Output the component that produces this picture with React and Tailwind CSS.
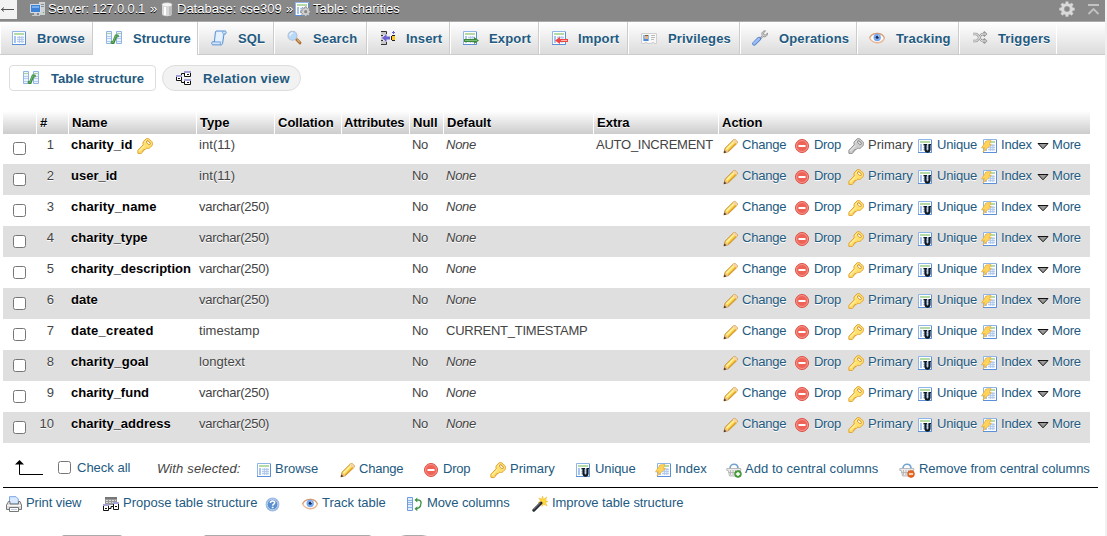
import React from "react";

function Svg({ children, className = "" }) {
  return (
    <svg viewBox="0 0 16 16" className={`h-4 w-4 shrink-0 ${className}`} fill="none" aria-hidden="true">
      {children}
    </svg>
  );
}

function Sheet() {
  return (
    <>
      <path d="M1.5 1.5h13v13h-13z" fill="#fff" stroke="#8fb4e8" />
      <path d="M14.5 2v12.500H1" stroke="#5b8fd8" />
      <path d="M3 3h10v2H3z" fill="#b4dba6" />
      <path d="M3 6h2v7H3z" fill="#a9c4ec" />
      <path d="M6 6h7v7H6z" fill="#e6effb" />
      <path d="M6 7.500h7M6 9.500h7M6 11.500h7M8.500 6v7M10.900 6v7" stroke="#a9c4ec" strokeWidth=".8" />
    </>
  );
}

const Browse = () => <Svg><Sheet /></Svg>;

const Structure = () => (
  <Svg>
    <path d="M.5 1.500h5v12h-5zM10.500 1.500h5v12h-5z" fill="#edf4fd" stroke="#8fb4e6" />
    <path d="M1 3.500h4M11 3.500h4" stroke="#a9d59c" />
    <path d="M1 6.500h4M1 8.500h4M1 11.500h4M11 6.500h4M11 8.500h4M11 11.500h4" stroke="#b4cbec" />
    <path d="M6 12.500h1.300L10 6h1.500" stroke="#3d8a3d" strokeWidth="2.800" strokeLinecap="round" />
    <path d="M6 12.200h1L9.700 6h1.800" stroke="#6db767" strokeWidth="1.100" strokeLinecap="round" />
  </Svg>
);

const Sql = () => (
  <Svg>
    <path d="M5 1h9.300c1.200 0 1.200 3 0 3H13l-1.400 9.500c-.2 1-.8 1.400-1.600 1.400H1.800c-1.500 0-1.400-3.200 0-3.200h1.600L4.300 3c.1-1 .2-1.600.7-2z" fill="#d0e4fa" stroke="#5c92d2" />
    <path d="M5.600 2h6.200l-1.300 9.700H4.300z" fill="#e6f1fe" />
    <path d="M12 1.300c-.8.5-.7 2.200.7 2.600M3 11.900h6.600c-.6 1-.4 2.400.4 2.800" stroke="#5c92d2" strokeWidth=".8" />
  </Svg>
);

const Search = () => (
  <Svg>
    <path d="m9.700 9.500 3.200 3.300" stroke="#a86d33" strokeWidth="3" strokeLinecap="round" />
    <path d="m10.100 9.500 2.800 2.900" stroke="#e0b070" strokeWidth="1.200" />
    <circle cx="5.500" cy="5.800" r="4.500" fill="#b9d9fa" stroke="#b2c0d4" strokeWidth="1.100" />
    <path d="M3 5.800a2.800 2.800 0 0 1 2.800-2.800" stroke="#eff8ff" strokeWidth="1.400" />
  </Svg>
);

const Insert = () => (
  <Svg>
    <path d="M1 2h5v3H1zM1 11h5v3H1zM1 5h2v6H1z" fill="#c9c9c9" />
    <path d="M1 1.500h5.500V4M1 5.500h2M1 10.500h2M6.500 12v2.500H1" stroke="#333" />
    <path d="m2 8 4.500-4v2.500H10v3H6.500V12z" fill="#6a62d2" />
    <path d="M15 5.500h-3M15 10.500h-3M11.500 6v4" stroke="#222" />
    <path d="M12 6h3v4h-3z" fill="#ffc524" />
    <path d="M13.500 1v3M12 2.500h3" stroke="#6a62d2" />
  </Svg>
);

const Export = () => (
  <Svg>
    <g transform="translate(-1 0)"><Sheet /></g>
    <path d="M1 9h10V7l5 3.500-5 3.500v-2H1z" fill="#3b8a3b" />
    <path d="M2 10.500h12" stroke="#80bd76" />
  </Svg>
);

const Import = () => (
  <Svg>
    <g transform="translate(-1 0)"><Sheet /></g>
    <path d="M16 9H8V7l-5 3.500L8 14v-2h8z" fill="#f04545" />
    <path d="M9 10.500h6" stroke="#ffb5a9" />
  </Svg>
);

const Privileges = () => (
  <Svg>
    <path d="M.5 3.500h15v10H13v-1h-2v1H6v-1H4v1H.5z" fill="#f8f8f8" stroke="#d0d0d0" />
    <path d="M2 5h6v6H2z" fill="#8abaf0" />
    <path d="M3 9h4v2H3z" fill="#4f86cf" />
    <path d="M4 6h3v3H4z" fill="#e8b582" />
    <path d="M4 5h3v1H4z" fill="#8a5a30" />
    <path d="M10 5.500h4M10 7.500h4M10 9.500h3" stroke="#bbb" />
  </Svg>
);

const Wrench = () => (
  <Svg>
    <path d="m7 9 3.200-3.300C9 3 11 .6 13.500.8l-2 2.300.4 1.600 1.600.4 2-2.200c.4 2.700-2 4.700-4.400 3.600L8 9.800z" fill="#d6d6d6" stroke="#8d8d8d" strokeWidth=".9" />
    <path d="m2.200 13.600 4.900-4.800" stroke="#517fc9" strokeWidth="4" strokeLinecap="round" />
    <path d="m2.200 13.300 4.700-4.500" stroke="#9cc0f6" strokeWidth="2.500" strokeLinecap="round" />
  </Svg>
);

const Eye = () => (
  <Svg>
    <path d="M.7 8C3 2.500 13 1.500 15.300 8 13.500 14 4 14.500.7 8z" fill="#fff" stroke="#e9b48e" strokeWidth="1.400" />
    <path d="M.6 7.500C3.500 2 12.500 1.800 15.400 7.500" stroke="#cf9a78" strokeWidth="1" />
    <circle cx="8.200" cy="7.500" r="3.700" fill="#7ba9ee" />
    <circle cx="8.200" cy="7.200" r="1.500" fill="#182d58" />
    <circle cx="9.500" cy="6" r=".6" fill="#fff" />
  </Svg>
);

const Triggers = () => (
  <Svg>
    <path d="M1 4h3c3 0 3.500 7 7 7h3M1 11h3c3 0 3.500-7 7-7h3M11.500 1.800 13.800 4l-2.300 2.200M11.500 8.800l2.300 2.200-2.300 2.200" stroke="#959595" strokeWidth="2.300" />
    <path d="M1 4h3c3 0 3.500 7 7 7h3M1 11h3c3 0 3.500-7 7-7h3" stroke="#eee" strokeWidth="1" />
  </Svg>
);

const Relation = () => (
  <Svg>
    <path d="M8 3.500H5.500V6M5.500 11v1.500H8" stroke="#111" />
    <path d="M8.500 2.500h6v4h-6zM.5 6.500h5v4h-5zM8.500 10.500h6v4h-6z" fill="#fff" stroke="#111" />
    <path d="M8 1h7v2H8zM0 5h6v2H0zM8 9h7v2H8z" fill="#a3a1d6" />
    <path d="M11 4.500h2M2 8.500h2M11 12.500h2" stroke="#111" />
  </Svg>
);

const Key = ({ gray = false }) => (
  <Svg>
    <path
      d="M9.300.7c1.500-.4 2.600 0 3.700 1.100l1.700 1.700c1.200 1.200 1.200 2.800.2 4.200l-1.800 1.900c-1 1-2.300 1-3.600.6L8.300 11.500H6.800V13H5.300v1.300l-.9 1.100H.9v-3.100l5.300-5.500C5.700 5.400 5.900 4 6.900 3z"
      fill={gray ? "#cdcdcd" : "#ffe06c"}
      stroke={gray ? "#919191" : "#e0a233"}
      strokeLinejoin="round"
    />
    <path d="m2 13.200 5.700-5.700M7.600 4.500 9.800 2.300" stroke={gray ? "#eee" : "#fff5bd"} />
    <path d="m10.500 3.800 1.800 1.800" stroke={gray ? "#7c7c7c" : "#c98a28"} strokeWidth="2.800" strokeLinecap="round" />
    <path d="m10.600 3.900 1.600 1.600" stroke={gray ? "#e8e8e8" : "#fff"} strokeWidth="1.400" strokeLinecap="round" />
  </Svg>
);

const Pencil = () => (
  <Svg>
    <path d="M1 14.800 2 10.300 10.600 1.800c1.200-1.200 4.800 2 3.600 3.400l-8.700 8.400z" fill="#fcdc5c" stroke="#bd8226" strokeWidth=".9" />
    <path d="m3.500 11 7.900-7.900" stroke="#fff3a8" strokeWidth="1.300" />
    <path d="m5.200 12.800 8-8" stroke="#e5a62c" strokeWidth="1.200" />
    <path d="m9.800 2.800 3.500 3.300.9-1c.9-1.200-2.400-4.400-3.600-3.300z" fill="#f6d2a8" />
    <path d="m1 14.800 1.100-4 3.200 3z" fill="#e8bd8b" />
    <path d="m.7 15.200.7-2.800 2 1.900z" fill="#4a3520" />
  </Svg>
);

const Drop = () => (
  <Svg>
    <circle cx="7" cy="8" r="6.500" fill="#ee6257" stroke="#dc5146" />
    <circle cx="7" cy="8" r="5.500" stroke="#f59a90" strokeWidth=".9" />
    <path d="M3.500 7h7v2h-7z" fill="#fff" />
  </Svg>
);

const Unique = () => (
  <Svg>
    <g transform="translate(-1 0)"><Sheet /></g>
    <path d="M7.500 7v4.500c0 2.700 4 2.700 4 0V7" stroke="#101820" strokeWidth="2.200" />
    <path d="M5.500 6.500h3.500M10.500 6.500h2.500" stroke="#101820" />
  </Svg>
);

const Index = () => (
  <Svg>
    <g transform="translate(1 0)"><Sheet /></g>
    <path d="m5 3 5-.5-1.800 4 2.300-.2L2 14l2-4.300-3.500.3z" fill="#ffd45c" stroke="#e8b040" strokeWidth=".8" />
  </Svg>
);

const More = () => (
  <svg viewBox="0 0 12 8" className="h-2 w-3 shrink-0" aria-hidden="true">
    <path d="M1 1.500h10L6 6.800z" fill="#999" stroke="#111" />
  </svg>
);

const Basket = ({ remove = false }) => (
  <Svg>
    <path d="M4 6.500C4 .8 12 .8 12 6.500" stroke="#75a3d1" strokeWidth="1.700" />
    <path d="M.8 6.500h14v2H13L11.500 14h-8L2.300 8.500H.8z" fill="#ececec" stroke="#ababab" strokeWidth=".8" />
    <path d="M4.500 8v5M7 8v5M9.500 8v5M2.500 10.500h10" stroke="#b0b0b0" strokeWidth=".8" />
    <circle cx="12" cy="12" r="3.400" fill={remove ? "#e8681f" : "#4ca23e"} stroke={remove ? "#cf5316" : "#34852b"} strokeWidth=".7" />
    <path d={remove ? "M9.900 12h4.200" : "M9.900 12h4.200M12 9.900v4.200"} stroke="#fff" strokeWidth="1.400" />
  </Svg>
);

const Printer = () => (
  <Svg>
    <path d="M3.500.7h6.500L12.300 3v5H3.500z" fill="#d8e9ff" stroke="#7aa5df" />
    <path d="M2.500 5.500H4V8h8.500V5.500H14L15.500 9v4.500H.5V9z" fill="#dedede" stroke="#777" />
    <path d="M1 9.500h14" stroke="#f8f8f8" />
    <path d="M3.500 11.500h9v4h-9z" fill="#fff" stroke="#777" />
    <path d="M5 13.500h6" stroke="#b9cde8" />
  </Svg>
);

const Propose = () => (
  <Svg>
    <path d="M2 1h12v8H2z" fill="#999" />
    <path d="M2 1h12v2H2z" fill="#777" />
    <path d="M3 4.500h10M3 6.500h10" stroke="#dcdcdc" strokeDasharray="2 1" />
    <path d="M.5 9.500h5v5h-5zM10.500 7.500h5v6h-5z" fill="#fff" stroke="#111" />
    <path d="M0 8h6v2H0zM10 6h6v2h-6z" fill="#a3a1d6" />
    <path d="M2 12.500h2M12 10.500h2M6 12.500h2v-2h2" stroke="#111" />
  </Svg>
);

const Help = () => (
  <Svg>
    <circle cx="7.500" cy="7.500" r="6.300" fill="#5b8fcf" stroke="#9bb9e0" strokeWidth="1.200" />
    <circle cx="7.500" cy="7.500" r="5.300" stroke="#dce9f8" strokeWidth=".8" />
    <path d="M5.400 6c0-2.700 4.500-2.500 4.300-.3-.1 1.400-2 1.300-2.100 2.900" stroke="#fff" strokeWidth="1.500" />
    <path d="M6.800 9.700h1.700v1.500H6.800z" fill="#fff" />
  </Svg>
);

const Move = () => (
  <Svg>
    <path d="M.5 1.500h5v13h-5z" fill="#e3eefc" stroke="#6d9ddd" />
    <path d="M1 4.500h4M1 6.500h4M1 8.500h4M1 11.500h4" stroke="#8fb4e4" />
    <path d="M8.500 4H11c3.500 0 3.500 3 2.500 5M13.800 9c-.8 3-2.500 3.500-5.300 3.700" stroke="#429348" strokeWidth="1.400" />
    <path d="M10.300 1.500 7.500 4l2.800 2.500M10.300 10.200l-2.800 2.500 2.800 2.600" fill="#429348" />
  </Svg>
);

const Wand = () => (
  <Svg>
    <path d="m10.500 0 1 3.400L14.700 1 13.500 4.500l2.500 1-2.500 1 1.500 3.300-3.500-1.600-1.500 2.300-.5-3-3.500-.6 2.500-2L6.800 2l3 1z" fill="#ffd83d" stroke="#ecb32d" strokeWidth=".5" />
    <path d="m1.800 14.200 7.200-7.200" stroke="#24282c" strokeWidth="3" strokeLinecap="round" />
    <path d="m1.600 13.700 6.900-6.900" stroke="#898f96" strokeWidth=".9" />
  </Svg>
);

const Server = () => (
  <Svg className="mt-px">
    <path d="M9 1h6v13H9z" fill="#cfd2d5" />
    <path d="M10 3.500h4M10 5.500h4" stroke="#888f96" />
    <path d="M.5 3.500h10v8H.5z" fill="#3e82d6" stroke="#d5dce5" />
    <path d="M2 5h7v2H2z" fill="#75b0f1" />
    <path d="M4 12h3v2H4zM2 14h8v1H2z" fill="#c5c8cb" />
    <path d="M13 11h1v1h-1z" fill="#62b44f" />
  </Svg>
);

const Database = () => (
  <Svg className="mt-px">
    <path d="M1 3v10c0 3 10 3 10 0V3z" fill="#d9d9d9" />
    <path d="M3 4v10h2V4z" fill="#fff" />
    <path d="M8 4v10.500c2-.2 3-.7 3-1.500V3z" fill="#bdbdbd" />
    <ellipse cx="6" cy="3.800" rx="5" ry="2" fill="#f5f5f5" stroke="#c3c3c3" strokeWidth=".6" />
  </Svg>
);

const gearPath =
  "M6.800.5h2.400l.4 2 1.300.6 1.800-1.200 1.600 1.700-1.100 1.700.5 1.300 2 .4v2.300l-2 .4-.6 1.300 1.200 1.700-1.700 1.700-1.700-1.200-1.300.6-.4 2H6.800l-.4-2-1.300-.6-1.700 1.200-1.700-1.700 1.100-1.700-.5-1.300-2-.4V7l2-.4.6-1.300-1.200-1.700 1.700-1.700 1.700 1.200 1.300-.6z";

const Gear = () => (
  <Svg>
    <path d={gearPath} fill="#dadada" stroke="#b5b5b5" strokeWidth=".4" />
    <circle cx="8" cy="8" r="2.800" fill="#888" stroke="#aaa" strokeWidth=".5" />
  </Svg>
);

const TableGear = () => (
  <Svg className="mt-px">
    <g transform="translate(-1 0)"><Sheet /></g>
    <g transform="translate(5.500 5.500) scale(.65)">
      <path d={gearPath} fill="#d0d0d0" stroke="#777" />
      <circle cx="8" cy="8" r="2.500" fill="#888" />
    </g>
  </Svg>
);

const tabs = [
  { label: "Browse", icon: <Browse />, box: "w-[93px] pl-[10px] gap-[10px]" },
  { label: "Structure", icon: <Structure />, box: "w-[105px] pl-3 gap-[11px] tracking-normal", active: true },
  { label: "SQL", icon: <Sql />, box: "w-[76px] pl-3 gap-[11px]" },
  { label: "Search", icon: <Search />, box: "w-[93px] pl-3 gap-[10px]" },
  { label: "Insert", icon: <Insert />, box: "w-[83px] pl-3 gap-[10px]" },
  { label: "Export", icon: <Export />, box: "w-[89px] pl-3 gap-[10px]" },
  { label: "Import", icon: <Import />, box: "w-[89px] pl-3 gap-[10px]" },
  { label: "Privileges", icon: <Privileges />, box: "w-[112px] pl-3 gap-[11px]" },
  { label: "Operations", icon: <Wrench />, box: "w-[117px] pl-[11px] gap-[11px]" },
  { label: "Tracking", icon: <Eye />, box: "w-[102px] pl-[11px] gap-[11px]" },
  { label: "Triggers", icon: <Triggers />, box: "w-[98px] pl-3 gap-[10px]" },
];

const cols = "grid grid-cols-[34px_32px_128px_78px_67px_68px_34px_150px_125px_371px]";
const headings = ["", "#", "Name", "Type", "Collation", "Attributes", "Null", "Default", "Extra", "Action"];

const rows = [
  ["charity_id", "int(11)", null, "AUTO_INCREMENT"],
  ["user_id", "int(11)"],
  ["charity_name", "varchar(250)"],
  ["charity_type", "varchar(250)"],
  ["charity_description", "varchar(250)"],
  ["date", "varchar(250)"],
  ["date_created", "timestamp", "CURRENT_TIMESTAMP"],
  ["charity_goal", "longtext"],
  ["charity_fund", "varchar(250)"],
  ["charity_address", "varchar(250)"],
];

const nameTracking = {
  charity_name: "tracking-[0.15px]",
  date_created: "tracking-[0.2px]",
  charity_goal: "tracking-[0.1px]",
};

function Check({ className = "" }) {
  return (
    <input
      type="checkbox"
      className={`h-[13px] w-[13px] shrink-0 appearance-none rounded-[2.5px] border border-[#767676] bg-white ${className}`}
    />
  );
}

function Item({ icon, label, box, muted = false }) {
  return (
    <a className={`flex shrink-0 items-start whitespace-nowrap ${muted ? "text-[#444]" : "text-[#235a81]"} ${box}`}>
      <span className="flex pt-0.5">{icon}</span>
      <span>{label}</span>
    </a>
  );
}

function Row({ data, n }) {
  const [name, type, def, extra] = data;
  return (
    <div className={`${cols} h-[31px] pt-[3px] leading-[18px] [text-shadow:0_1px_0_#fff] ${n % 2 === 0 ? "bg-[#dfdfdf]" : "bg-white"}`}>
      <div className="flex pt-1.5 pl-2.5"><Check /></div>
      <div className="pr-[15px] text-right">{n}</div>
      <div className={`flex gap-[5px] pl-[2px] font-bold whitespace-nowrap text-black ${nameTracking[name] || ""}`}>
        {name}
        {n === 1 && <span className="flex pt-0.5"><Key /></span>}
      </div>
      <div className={`pl-[2px] ${type.startsWith("varchar") ? "tracking-[-0.3px]" : "tracking-[0.05px]"}`}>{type}</div>
      <div />
      <div />
      <div className="pl-[2px] tracking-[-0.3px]">No</div>
      <div className={`pl-[2px] tracking-[-0.25px] ${def ? "" : "italic"}`}>{def || "None"}</div>
      <div className="pl-[2px] tracking-[-0.25px]">{extra}</div>
      <div className="flex pl-1">
        <Item icon={<Pencil />} label="Change" box="w-[72px] gap-[3px] tracking-[-0.2px]" />
        <Item icon={<Drop />} label="Drop" box="w-[53px] gap-[3px] tracking-[-0.3px]" />
        <Item icon={<Key gray={n === 1} />} label="Primary" muted={n === 1} box="w-[70px] gap-1" />
        <Item icon={<Unique />} label="Unique" box="w-[63px] gap-[3px] tracking-[-0.2px]" />
        <Item icon={<Index />} label="Index" box="w-[56px] gap-1 tracking-[-0.2px]" />
        <a className="flex items-start gap-[3px] tracking-[-0.2px] text-[#235a81]">
          <span className="flex pt-[6px]"><More /></span>
          <span>More</span>
        </a>
      </div>
    </div>
  );
}

export default function App() {
  return (
    <div className="flex h-[536px] w-[1107px] overflow-hidden bg-white font-['Liberation_Sans',Arial,sans-serif] text-[13px] text-[#444]">
      <div className="flex w-[1105px] shrink-0 flex-col *:shrink-0">
        <header className="flex h-[21px] items-start bg-[#888] leading-[17px] whitespace-nowrap text-white [text-shadow:0_1px_0_#000]">
          <div className="flex h-[19px] w-[17px] items-center bg-[#f3f3f3]">
            <svg viewBox="0 0 17 19" className="h-[19px] w-[17px]" fill="none" aria-hidden="true">
              <path d="M1 9.500h13M4 7.500 1.500 9.500 4 11.500" stroke="#555" />
            </svg>
          </div>
          <div className="flex w-[131px] gap-[2px] pl-[13px] tracking-[-0.15px]"><Server />Server: 127.0.0.1</div>
          <div className="w-3 pl-[2px]">»</div>
          <div className="flex w-[123px] gap-[2px] pl-px"><span className="flex w-[14px]"><Database /></span>Database: cse309</div>
          <div className="w-3 pl-[3px]">»</div>
          <div className="flex gap-[2px]"><TableGear />Table: charities</div>
          <div className="ml-auto flex gap-3 pt-px pr-[5px]">
            <Gear />
            <svg viewBox="0 0 13 13" className="mt-0.5 h-[13px] w-[13px]" fill="none" aria-hidden="true">
              <path d="M1 2h11M1.500 11 6.500 6l5 5" stroke="#c2c2c2" strokeWidth="1.800" />
            </svg>
          </div>
        </header>

        <nav className="flex h-[34px] border-t border-b border-t-[#aaa] border-b-[#ccc] bg-linear-to-b from-white to-[#dcdcdc] font-bold tracking-[0.15px] text-[#235a81]">
          {tabs.map((t) => (
            <a
              key={t.label}
              className={`flex shrink-0 items-center border-r border-r-[#ccc] border-l border-l-white leading-[18px] [text-shadow:0_1px_0_#fff] last:border-r-white ${t.box} ${t.active ? "-mb-px bg-white pb-px" : ""}`}
            >
              {t.icon}
              <span className="pt-0.5">{t.label}</span>
            </a>
          ))}
        </nav>

        <div className="flex gap-1.5 pt-[10px] pl-[9px] font-bold text-[#235a81]">
          <a className="flex h-[26px] w-[147px] items-center gap-3 rounded-[4px] border border-[#ddd] pl-[13px] whitespace-nowrap">
            <Structure /><span className="pt-px">Table structure</span>
          </a>
          <a className="flex h-[26px] w-[139px] items-center gap-[11px] rounded-full border border-[#ddd] bg-[#f2f2f2] pl-[13px] tracking-[0.3px] whitespace-nowrap">
            <Relation /><span className="pt-px">Relation view</span>
          </a>
        </div>

        <section className="mt-5 ml-[3px] w-[1087px]">
          <div className={`${cols} h-[22px] leading-[23px] font-bold text-black [text-shadow:0_1px_0_#fff]`}>
            {headings.map((h, i) => (
              <div
                key={i}
                className={`border-r border-white bg-linear-to-b from-white to-[#ccc] whitespace-nowrap last:border-r-0 ${h === "Attributes" ? "pl-[2px] tracking-[-0.1px]" : "pl-[3px]"}`}
              >
                {h}
              </div>
            ))}
          </div>
          {rows.map((r, i) => <Row key={r[0]} data={r} n={i + 1} />)}
        </section>

        <div className="ml-[3px] flex h-[45px] w-[1095px] items-start border-b border-black pt-[17px] leading-[18px]">
          <svg viewBox="0 0 30 18" className="-mt-px ml-3 h-[18px] w-[30px] shrink-0" fill="none" aria-hidden="true">
            <path d="M4.500 3v12.500H28" stroke="#000" />
            <path d="M0 5.500 4.500 1 9 5.500z" fill="#000" />
          </svg>
          <label className="-mt-px ml-[13px] flex w-[99px] shrink-0 gap-1.5 text-[#235a81]">
            <Check className="mt-[2px]" />Check all
          </label>
          <i className="w-[99px] shrink-0 tracking-[0.15px]">With selected:</i>
          <Item icon={<Browse />} label="Browse" box="w-[84px] gap-[3px]" />
          <Item icon={<Pencil />} label="Change" box="w-[84px] gap-[3px] tracking-[-0.2px]" />
          <Item icon={<Drop />} label="Drop" box="w-[66px] gap-[3px] tracking-[-0.2px]" />
          <Item icon={<Key />} label="Primary" box="w-[86px] gap-1" />
          <Item icon={<Unique />} label="Unique" box="w-[79px] gap-[3px] tracking-[-0.1px]" />
          <Item icon={<Index />} label="Index" box="w-[71px] gap-1" />
          <Item icon={<Basket />} label="Add to central columns" box="w-[173px] gap-[3px] tracking-[0.05px]" />
          <Item icon={<Basket remove />} label="Remove from central columns" box="gap-1 tracking-[-0.07px]" />
        </div>

        <div className="flex items-start pt-[6px] pl-1.5 leading-[18px]">
          <Item icon={<Printer />} label="Print view" box="w-[97px] gap-1 tracking-[-0.1px]" />
          <Item icon={<Propose />} label="Propose table structure" box="w-[162px] gap-1" />
          <span className="flex w-[37px] pt-[3px]"><Help /></span>
          <Item icon={<Eye />} label="Track table" box="w-[105px] gap-1" />
          <Item icon={<Move />} label="Move columns" box="w-[125px] gap-1 tracking-[-0.1px]" />
          <Item icon={<Wand />} label="Improve table structure" box="gap-1 tracking-[-0.07px]" />
        </div>

        <div className="mt-[22px] flex pl-[61px]">
          <span className="h-6 w-[62px] rounded-[3px] border border-[#aaa]" />
          <span className="ml-[80px] h-6 w-[169px] rounded-[3px] border border-[#aaa]" />
          <span className="ml-[22px] h-6 w-[40px] rounded-full border border-[#aaa] bg-[#ccc]" />
        </div>
      </div>
      <div className="w-0.5 shrink-0 bg-[#f0f0f0]" />
    </div>
  );
}
